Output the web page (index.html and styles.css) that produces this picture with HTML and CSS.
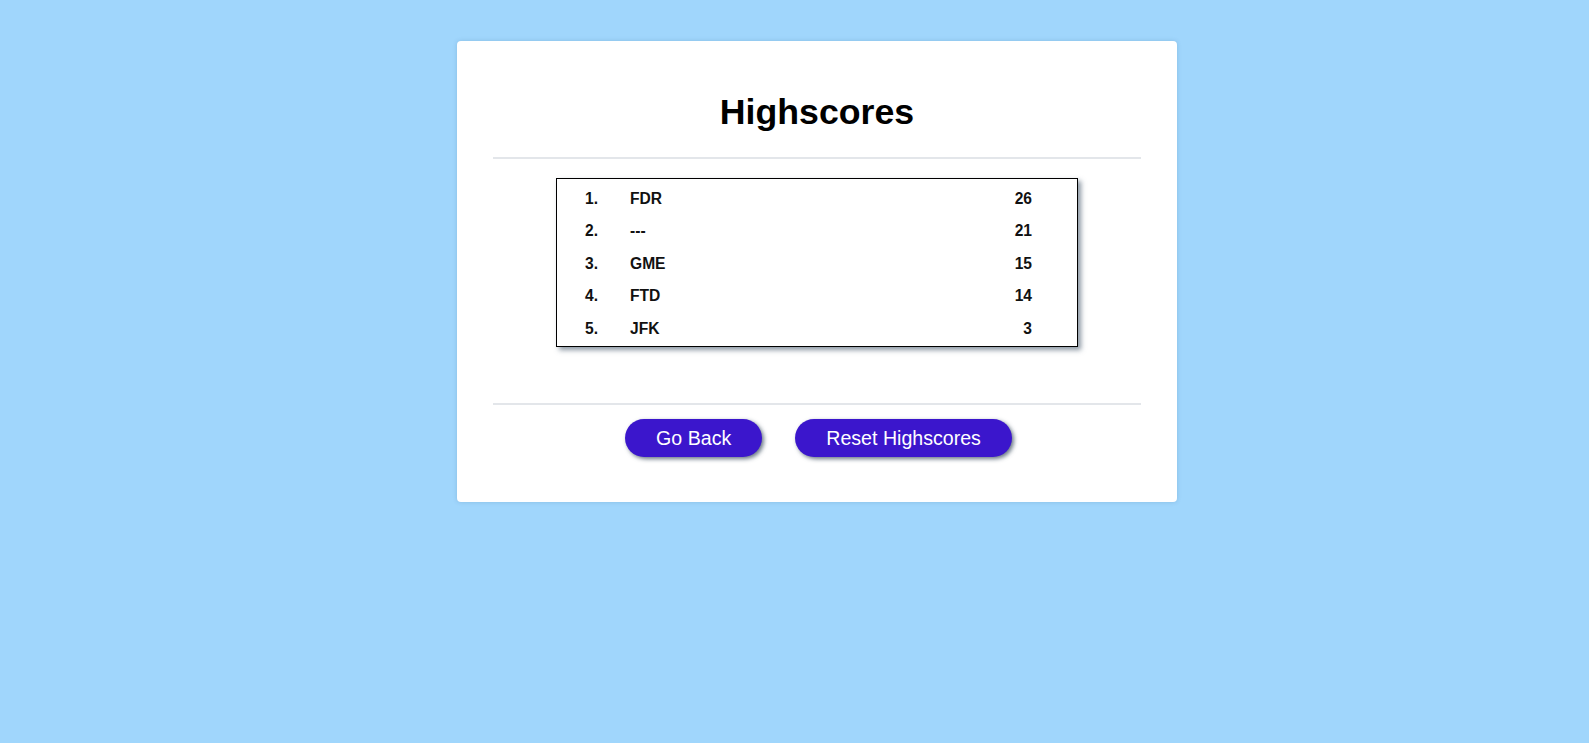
FILE: index.html
```html
<!DOCTYPE html>
<html lang="en">
<head>
<meta charset="utf-8">
<title>Highscores</title>
<link rel="stylesheet" href="styles.css">
</head>
<body>
<main class="card">
  <h1 class="title">Highscores</h1>
  <hr class="rule rule-top">
  <div class="board">
    <table class="scores">
      <colgroup>
        <col class="col-rank">
        <col class="col-name">
        <col class="col-score">
      </colgroup>
      <tbody>
        <tr><td class="rank">1.</td><td class="name">FDR</td><td class="score">26</td></tr>
        <tr><td class="rank">2.</td><td class="name">---</td><td class="score">21</td></tr>
        <tr><td class="rank">3.</td><td class="name">GME</td><td class="score">15</td></tr>
        <tr><td class="rank">4.</td><td class="name">FTD</td><td class="score">14</td></tr>
        <tr><td class="rank">5.</td><td class="name">JFK</td><td class="score">3</td></tr>
      </tbody>
    </table>
  </div>
  <hr class="rule rule-bottom">
  <div class="actions">
    <button class="btn" type="button">Go Back</button>
    <button class="btn" type="button">Reset Highscores</button>
  </div>
</main>
</body>
</html>
```

FILE: styles.css
```css
html, body {
  margin: 0;
  padding: 0;
}

body {
  background: #a0d6fc;
  font-family: "Liberation Sans", Arial, sans-serif;
  color: #000;
  min-height: 743px;
}

.card {
  box-sizing: border-box;
  width: 720px;
  margin: 41px 0 0 calc(50% - 337.5px);
  padding: 51px 36px 45px;
  background: #fff;
  border-radius: 4px;
  box-shadow: 0 0 4px rgba(60, 110, 150, 0.25);
}

.title {
  margin: 0;
  text-align: center;
  font-size: 35.7px;
  line-height: 41px;
  font-weight: bold;
}

.rule {
  height: 2px;
  border: 0;
  margin: 0;
  background: #e3e6ea;
}

.rule-top {
  margin-top: 24px;
}

.board {
  box-sizing: border-box;
  width: 522px;
  margin: 19px auto 0;
  padding: 3px 0 0;
  border: 1px solid #000;
  box-shadow: 3px 3px 5px rgba(60, 80, 100, 0.6);
}

.scores {
  width: 100%;
  table-layout: fixed;
  border-collapse: separate;
  border-spacing: 0 2px;
  font-size: 15.6px;
  font-weight: bold;
  color: #111;
}

.col-rank {
  width: 73px;
}

.col-score {
  width: 100px;
}

.scores td {
  padding: 6px 0;
  line-height: 18.4px;
  white-space: nowrap;
}

.scores .rank {
  padding-left: 28px;
}

.scores .name {
  text-align: left;
}

.scores .score {
  text-align: right;
  padding-right: 45px;
}

.rule-bottom {
  margin-top: 56px;
}

.actions {
  display: flex;
  justify-content: center;
  gap: 33px;
  margin-top: 14px;
  padding-left: 3px;
}

.btn {
  font-family: "Liberation Sans", Arial, sans-serif;
  font-size: 19.6px;
  line-height: 22px;
  padding: 8px 31px;
  border: 0;
  border-radius: 19px;
  background: #3b16cc;
  color: #fff;
  box-shadow: 2px 2px 4px rgba(40, 60, 80, 0.7);
  cursor: pointer;
}
```
